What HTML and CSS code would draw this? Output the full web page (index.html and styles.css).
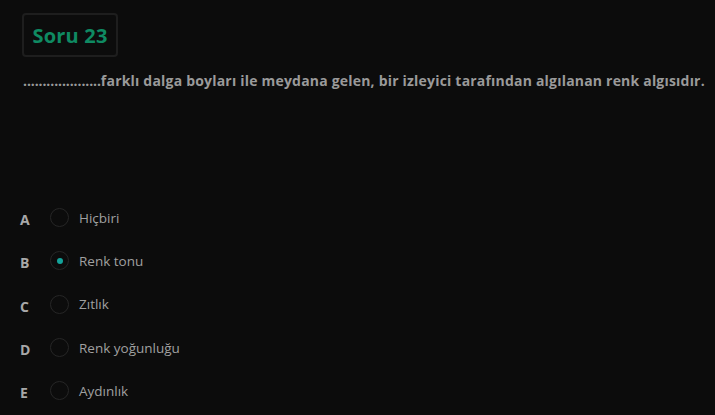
FILE: index.html
```html
<!DOCTYPE html>
<html lang="tr">
<head>
<meta charset="utf-8">
<link rel="stylesheet" href="styles.css">
</head>
<body>
<div class="page">
  <div class="badge">Soru 23</div>
  <p class="question"><span class="dots">....................</span>farklı dalga boyları ile meydana gelen, bir izleyici tarafından algılanan renk algısıdır.</p>
  <div class="options">
    <div class="option"><span class="letter">A</span><span class="radio"></span><span class="label">Hiçbiri</span></div>
    <div class="option"><span class="letter">B</span><span class="radio checked"></span><span class="label">Renk tonu</span></div>
    <div class="option"><span class="letter">C</span><span class="radio"></span><span class="label">Zıtlık</span></div>
    <div class="option"><span class="letter">D</span><span class="radio"></span><span class="label">Renk yoğunluğu</span></div>
    <div class="option"><span class="letter">E</span><span class="radio"></span><span class="label">Aydınlık</span></div>
  </div>
</div>
</body>
</html>
```

FILE: styles.css
```css
html, body {
  margin: 0;
  padding: 0;
  background: #0c0c0c;
  font-family: "Open Sans", "DejaVu Sans", sans-serif;
}
.page {
  padding: 13px 5px 0 22px;
}
.badge {
  display: inline-flex;
  align-items: center;
  justify-content: center;
  width: 96px;
  height: 44px;
  box-sizing: border-box;
  border: 2px solid #1e1e1e;
  border-radius: 4px;
  color: #0f8a62;
  font-size: 20px;
  font-weight: 700;
  letter-spacing: 0.2px;
}
.question {
  margin: 14px 0 0 1px;
  color: #9a9a9a;
  font-size: 14px;
  font-weight: 700;
  letter-spacing: 0.2px;
  white-space: nowrap;
}
.dots {
  letter-spacing: -0.1px;
}
.options {
  margin-top: 106px;
  display: flex;
  flex-direction: column;
}
.option {
  display: flex;
  align-items: center;
  height: 43.3px;
}
.letter {
  width: 30px;
  margin-left: -2px;
  padding-top: 4px;
  color: #a8a8a8;
  font-weight: 700;
  font-size: 14px;
}
.radio {
  width: 17px;
  height: 17px;
  border: 1px solid #262626;
  border-radius: 50%;
  display: flex;
  align-items: center;
  justify-content: center;
}
.radio.checked::after {
  content: "";
  width: 6px;
  height: 6px;
  border-radius: 50%;
  background: #14a39a;
}
.label {
  margin-left: 10px;
  color: #a0a0a0;
  font-size: 13.5px;
  font-weight: 500;
}
```
